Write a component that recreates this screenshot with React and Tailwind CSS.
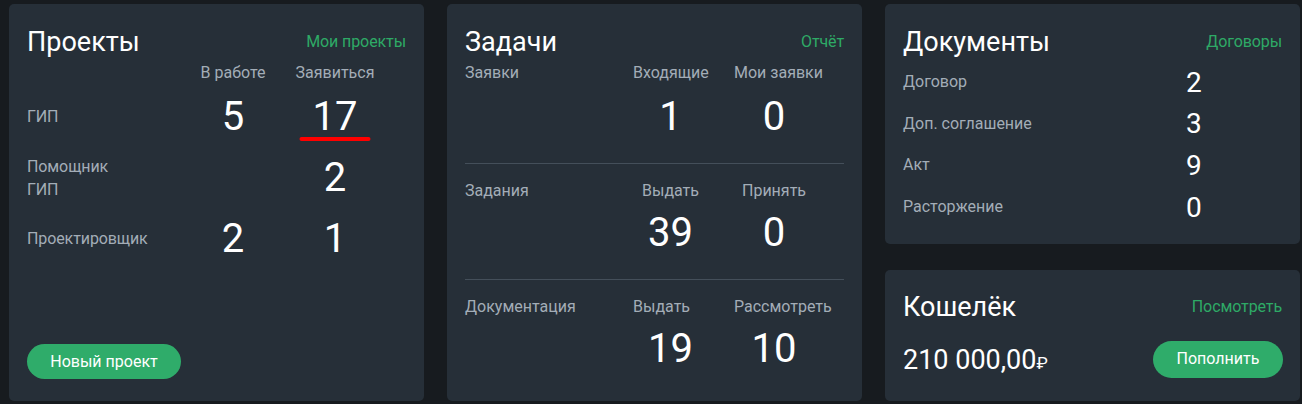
import React from "react";

const font = { fontFamily: "Roboto, 'Noto Sans', sans-serif" };

function CardHeader({ title, link }) {
  return (
    <div className="flex items-center justify-between">
      <div className="text-[27px] leading-[33px] text-white">{title}</div>
      <div className="text-[16px] leading-[20px] tracking-[-0.1px] text-[#2eaa66]">{link}</div>
    </div>
  );
}

function Projects() {
  const rows = [
    { label: "ГИП", a: "5", b: "17", underline: true },
    { label: ["Помощник", "ГИП"], a: "", b: "2" },
    { label: "Проектировщик", a: "2", b: "1" },
  ];
  return (
    <div className="flex h-[397px] w-[415px] flex-col rounded-[5px] bg-[#262f38] px-[18px] pt-[21.5px] pb-[22px]">
      <CardHeader title="Проекты" link="Мои проекты" />
      <div className="mt-[4.5px] grid grid-cols-[144px_80px_80px] gap-x-[22px]">
        <div />
        <div className="h-5 text-center text-[16px] leading-5 whitespace-nowrap text-[#a3adb7]">В работе</div>
        <div className="h-5 text-center text-[16px] leading-5 whitespace-nowrap text-[#a3adb7]">Заявиться</div>
      </div>
      <div className="mt-[3px] flex flex-col">
        {rows.map((r, i) => (
          <div key={i} className="grid h-[61px] grid-cols-[144px_80px_80px] items-center gap-x-[22px]">
            <div className="text-[16px] leading-[23px] tracking-[-0.1px] text-[#a3adb7]">
              {Array.isArray(r.label) ? r.label.map((l) => <div key={l}>{l}</div>) : r.label}
            </div>
            <div className="text-center text-[40px] leading-[47px] text-white">{r.a}</div>
            <div className="relative text-center text-[40px] leading-[47px] text-white">
              {r.b}
              {r.underline && (
                <div className="absolute top-[44px] left-1/2 h-[4px] w-[71px] -translate-x-1/2 rounded-full bg-[#ff0000]" />
              )}
            </div>
          </div>
        ))}
      </div>
      <button className="mt-auto h-[35px] w-[154px] rounded-full bg-[#2fac6a] text-[16px] text-white">
        Новый проект
      </button>
    </div>
  );
}

function TaskSection({ label, h1, h2, n1, n2, align1, align2, first, last }) {
  return (
    <div className={`${first ? "" : "border-t border-[#444f5a] pt-[17px]"} ${last ? "" : "pb-[22.5px]"}`}>
      <div className="grid grid-cols-[142px_75px_80px] gap-x-[26px]">
        <div className="h-5 text-[16px] leading-5 text-[#a3adb7]">{label}</div>
        <div className={`h-5 text-[16px] leading-5 whitespace-nowrap text-[#a3adb7] ${align1}`}>{h1}</div>
        <div className={`h-5 text-[16px] leading-5 whitespace-nowrap text-[#a3adb7] ${align2}`}>{h2}</div>
      </div>
      <div className={`grid grid-cols-[142px_75px_80px] gap-x-[26px] ${first ? "mt-[10px]" : "mt-[8.5px]"}`}>
        <div />
        <div className="text-center text-[40px] leading-[47px] text-white">{n1}</div>
        <div className="text-center text-[40px] leading-[47px] text-white">{n2}</div>
      </div>
    </div>
  );
}

function Tasks() {
  return (
    <div className="flex h-[397px] w-[415px] flex-col rounded-[5px] bg-[#262f38] px-[18px] pt-[21.5px]">
      <CardHeader title="Задачи" link="Отчёт" />
      <div className="mt-[4.5px] flex flex-col">
        <TaskSection first label="Заявки" h1="Входящие" h2="Мои заявки" n1="1" n2="0" align1="text-center" align2="text-left" />
        <TaskSection label="Задания" h1="Выдать" h2="Принять" n1="39" n2="0" align1="text-center" align2="text-center" />
        <TaskSection last label="Документация" h1="Выдать" h2="Рассмотреть" n1="19" n2="10" align1="text-left" align2="text-left" />
      </div>
    </div>
  );
}

function Documents() {
  const rows = [
    ["Договор", "2"],
    ["Доп. соглашение", "3"],
    ["Акт", "9"],
    ["Расторжение", "0"],
  ];
  return (
    <div className="flex h-[240px] w-[415px] flex-col rounded-[5px] bg-[#262f38] px-[18px] pt-[21.5px]">
      <CardHeader title="Документы" link="Договоры" />
      <div className="mt-[2.7px] flex flex-col">
        {rows.map(([l, n]) => (
          <div key={l} className="grid h-[41.7px] grid-cols-[283px_auto] items-center">
            <div className="text-[16px] leading-5 text-[#a3adb7]">{l}</div>
            <div className="text-[28px] leading-[33px] text-white">{n}</div>
          </div>
        ))}
      </div>
    </div>
  );
}

function Wallet() {
  return (
    <div className="flex w-[415px] flex-1 flex-col rounded-[5px] bg-[#262f38] px-[18px] pt-[20.5px] pb-[21px]">
      <CardHeader title="Кошелёк" link="Посмотреть" />
      <div className="mt-auto flex items-center justify-between">
        <div className="mt-[6px] text-[27px] leading-[33px] text-white">
          210 000,00<span className="text-[17px]">₽</span>
        </div>
        <button className="mr-[-1px] h-[37px] w-[130px] rounded-full bg-[#2fac6a] text-[16px] text-white">
          Пополнить
        </button>
      </div>
    </div>
  );
}

export default function App() {
  return (
    <div style={font} className="h-[404px] w-[1302px] overflow-hidden bg-[#171b1f]">
      <div className="flex gap-[23px] pt-[4px] pl-[9px]">
        <Projects />
        <Tasks />
        <div className="flex h-[397px] flex-col gap-[26px]">
          <Documents />
          <Wallet />
        </div>
      </div>
    </div>
  );
}
